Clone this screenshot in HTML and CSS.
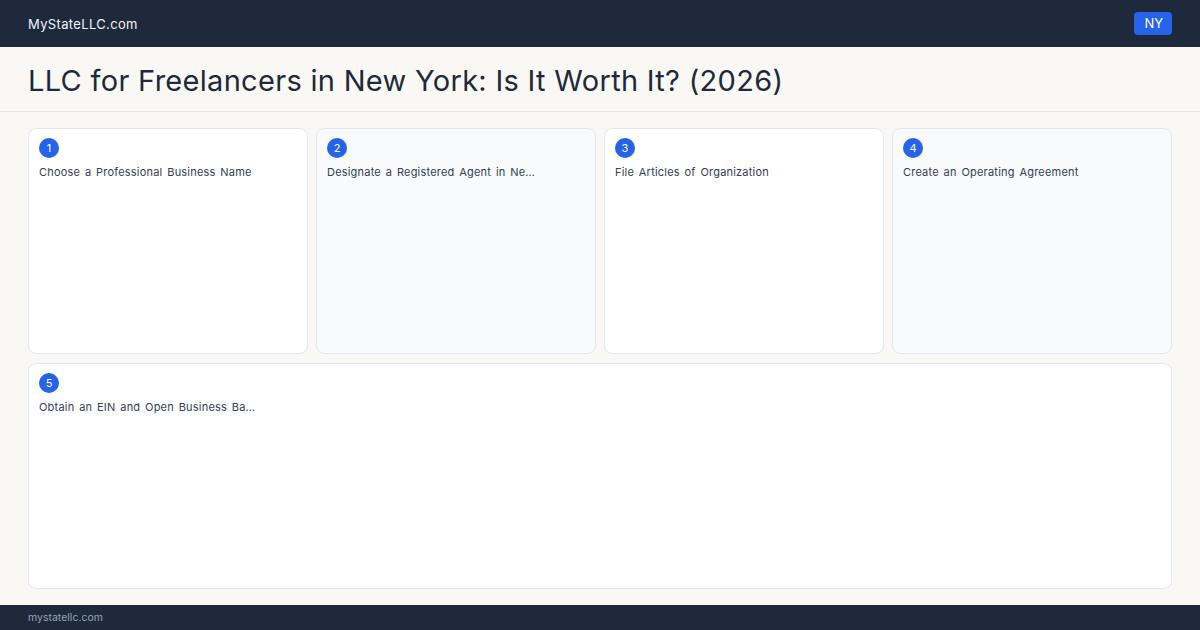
FILE: index.html
```html
<!DOCTYPE html>
<html lang="en">
<head>
	<meta charset="UTF-8">
	<title>LLC for Freelancers in New York</title>
	<link rel="stylesheet" href="styles.css">
</head>
<body>
	<div class="page">
		<div class="topbar">
			<span class="brand">MyStateLLC.com</span>
			<span class="state">NY</span>
		</div>
		<div class="heading">
			<h1>LLC for Freelancers in New York: Is It Worth It? (2026)</h1>
		</div>
		<div class="steps">
			<div class="step">
				<span class="num">1</span>
				<p>Choose a Professional Business Name</p>
			</div>
			<div class="step alt">
				<span class="num">2</span>
				<p>Designate a Registered Agent in Ne…</p>
			</div>
			<div class="step">
				<span class="num">3</span>
				<p>File Articles of Organization</p>
			</div>
			<div class="step alt">
				<span class="num">4</span>
				<p>Create an Operating Agreement</p>
			</div>
			<div class="step wide">
				<span class="num">5</span>
				<p>Obtain an EIN and Open Business Ba…</p>
			</div>
		</div>
		<div class="footer">mystatellc.com</div>
	</div>
</body>
</html>
```

FILE: styles.css
```css
*{box-sizing:border-box;}
html,body{margin:0;padding:0;}
body{font-family:Inter,"Liberation Sans",sans-serif;background:#faf8f5;color:#1e293b;}
.page{width:1200px;height:630px;display:flex;flex-direction:column;}
.topbar{height:47px;background:#1e293b;display:flex;align-items:center;justify-content:space-between;padding:0 28px;}
.brand{color:#f1f5f9;font-size:13px;letter-spacing:0.35px;}
.state{background:#2563eb;color:#fff;font-size:13px;line-height:23px;padding:0 9px 0 10px;border-radius:4px;}
.heading{height:65px;border-bottom:1px solid #e2e8f0;display:flex;align-items:center;padding:2px 28px 0;}
.heading h1{margin:0;font-size:29px;font-weight:400;color:#1e293b;letter-spacing:0.3px;}
.steps{flex:1;display:grid;grid-template-columns:repeat(4,1fr);grid-template-rows:1fr 1fr;gap:9px 8px;padding:16px 28px;}
.step{background:#fff;border:1px solid #e2e8f0;border-radius:8px;padding:9px 10px;}
.step.alt{background:#f8fafc;}
.step.wide{grid-column:1 / 5;}
.num{display:flex;width:20px;height:20px;border-radius:50%;background:#2563eb;color:#fff;font-size:11px;align-items:center;justify-content:center;}
.step p{margin:7px 0 0;font-size:11px;line-height:14px;color:#334155;letter-spacing:0.2px;word-spacing:1.5px;}
.footer{height:25px;background:#1e293b;color:#94a3b8;font-size:10.5px;display:flex;align-items:center;padding:0 28px;}
```
